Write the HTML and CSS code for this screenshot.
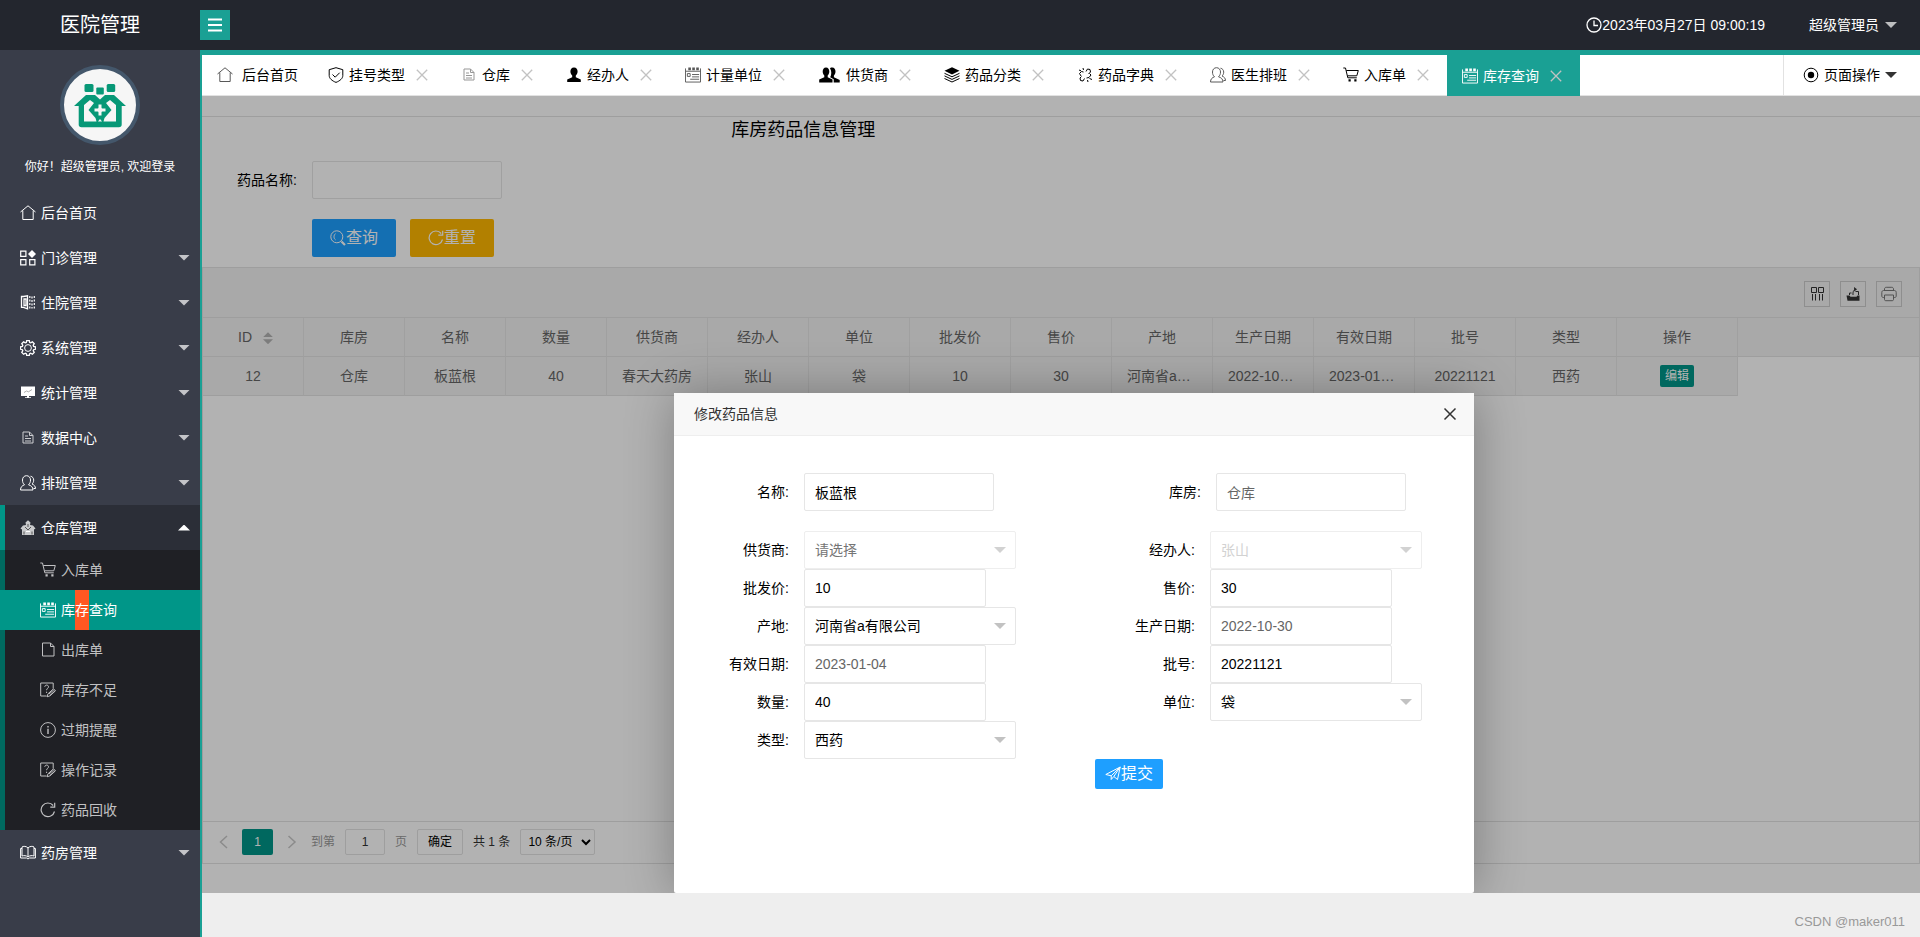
FILE: index.html
```html
<!DOCTYPE html>
<html lang="zh-CN">
<head>
<meta charset="utf-8">
<title>医院管理</title>
<link rel="stylesheet" href="styles.css">
</head>
<body>
<svg class="sprite" aria-hidden="true">
  <symbol id="i-menu" viewBox="0 0 16 16"><path d="M1 2.500h14M1 8h14M1 13.500h14" stroke-width="2"/></symbol>
  <symbol id="i-home" viewBox="0 0 16 16"><path d="M.5 7 8 .8 15.500 7M2.800 5.500V14.500H13.200V5.500"/></symbol>
  <symbol id="i-apps" viewBox="0 0 16 16"><path d="M.7 1.200h5.200v5.200H.7zM.7 9.700h5.200v5.200H.7zM9.700 9.700h5.200v5.200H9.700z" stroke-width="1.200"/><path d="M12 0l4 4-4 4-4-4z" fill="currentColor" stroke="none"/></symbol>
  <symbol id="i-ward" viewBox="0 0 16 16"><path d="M1.500 1.500h2l4-.7v13l-4-1.500h-2zM4 4h2v6.500H4z" stroke-width="1.300"/><path d="M9.800 1v13M12 1.500v12M14.300 1v13" stroke-dasharray="2 1.500" stroke-width="1.200"/></symbol>
  <symbol id="i-gear" viewBox="0 0 16 16"><circle cx="8" cy="8" r="3.400"/><path d="M6.700.6h2.600l.4 1.900 1 .4 1.700-1 1.800 1.800-1 1.700.4 1 1.900.4v2.500l-1.900.4-.4 1 1 1.700-1.800 1.800-1.700-1-1 .4-.4 1.900H6.700l-.4-1.900-1-.4-1.700 1-1.800-1.800 1-1.700-.4-1L.5 9.300V6.800l1.900-.4.4-1-1-1.700 1.800-1.800 1.700 1 1-.4z" stroke-width="1.300"/></symbol>
  <symbol id="i-board" viewBox="0 0 16 16"><path d="M1 1.500h14v9.500H9v1.200h2V13H5v-.8h2V11H1z" fill="currentColor" stroke="none"/><path d="M4 7.500l2.500-1.500 2 .8L12 4.500" stroke="#999" stroke-width=".8"/></symbol>
  <symbol id="i-doc" viewBox="0 0 16 16"><path d="M3 2h6.500L13 5.500V13H3zM9.500 2v3.500H13M5 6h3M5 8.500h6M5 11h6"/></symbol>
  <symbol id="i-users" viewBox="0 0 16 16"><path d="M.5 15c0-3 1.800-4.500 4-5.200C3 8.500 2.500 7 2.500 5c0-2.500 1.600-4.300 4-4.300s4 1.800 4 4.300c0 2-.6 3.500-2 4.800 2.500.7 4.500 2.200 4.500 5.200zM10.500 1.200c2 .3 3.200 2 3.200 3.900 0 1.700-.6 3-1.700 3.900 2 .8 3.500 2.200 3.500 4.500h-2"/></symbol>
  <symbol id="i-store" viewBox="0 0 16 16"><path d="M8 .3l2.500 2.200L10 5l3 .5 2.500 3-1.500 1V15H2V9.500l-1.500-1 2.500-3L6 5l-.5-2.500z" fill="currentColor" stroke="none" opacity=".75"/><path d="M4 14.500v-3M12 14.500v-3M5 7l3 3 3-3M8 4v3" stroke="#555"/><path d="M6 11.500h4" stroke="#fff"/></symbol>
  <symbol id="i-cart" viewBox="0 0 16 16"><path d="M.3 1h2.200l2.300 9.800h9M3.300 3.500h12l-1.500 5.300H4.600"/><path d="M5.500 12.200h2.200v2.300H5.500zM11.300 12.200h2.200v2.300h-2.200z" fill="currentColor" stroke="none"/></symbol>
  <symbol id="i-form" viewBox="0 0 17 16"><path d="M.5 1v14.500h16V1M.5 4h16M7.500 7.500h7.500M7.500 10h7.500M5.500 12.500h9.500"/><path d="M2.500 6.500h3v3h-3z"/><path d="M3.500 0h2.800v3H3.500zM7.700 0h2.800v3H7.700zM11.900 0h2.800v3h-2.800z" fill="currentColor" stroke="none"/></symbol>
  <symbol id="i-file" viewBox="0 0 16 16"><path d="M2.500 1h8L14 4.500V14H2.500zM10.500 1v3.500H14"/></symbol>
  <symbol id="i-ask" viewBox="0 0 16 16"><path d="M6.500 14H.7V1h12.500v5.500M4.800 4.800c0-2.300 3.700-2.300 3.700 0 0 1.500-1.900 1.600-1.900 3.400M6.600 9.700V11M7 14.800l1-3 5.500-5 2 2-5.500 5zM9 12l4.800-4M10 13.300l5-4.500"/></symbol>
  <symbol id="i-info" viewBox="0 0 16 16"><circle cx="8" cy="8" r="7.400"/><path d="M8 6.800V12M8 4v1.500" stroke-width="1.400"/></symbol>
  <symbol id="i-refresh" viewBox="0 0 16 16"><path d="M14.500 9.500A6.800 6.800 0 1 1 13.200 3.500M14.700.8v4.400h-4.400" stroke-width="1.200"/></symbol>
  <symbol id="i-book" viewBox="0 0 16 16"><path d="M8 3C6.500 1 3 1 2 2v9c1.500-.6 4.500-.6 6 1 1.500-1.600 4.500-1.600 6-1V2c-1-1-4.500-1-6 1zM8 3v9M2 3.500H.6v9.500h6l1.400 1 1.400-1h6V3.500H14"/></symbol>
  <symbol id="i-shield" viewBox="0 0 16 16"><path d="M8 .7l6.800 2v5.800c0 3-2.800 5.300-6.800 6.900-4-1.600-6.800-3.900-6.800-6.900V2.700zM4.500 7.500l2.700 2.700 4.500-4.500"/></symbol>
  <symbol id="i-person" viewBox="0 0 16 16"><path d="M8 .5c2.500 0 3.600 1.800 3.600 4 0 1.700-.8 3.200-1.800 4v1.800l5 2.200v2.500H1.200v-2.500l5-2.200V8.500c-1-.8-1.800-2.300-1.800-4C4.400 2.300 5.500.5 8 .5z" fill="currentColor" stroke="none"/></symbol>
  <symbol id="i-group" viewBox="0 0 21 16"><path d="M7 .5c2.200 0 3.300 1.800 3.300 4 0 1.700-.7 3-1.600 4v1.800l4.800 2.200v3H.2v-3L5.300 10.300V8.500c-.9-1-1.600-2.300-1.600-4 0-2.200 1.100-4 3.300-4zM11 1.200c.6-.6 1.400-.7 2.200-.7 2.200 0 3.300 1.800 3.300 4 0 1.700-.7 3-1.600 4v1.800l5.800 2.700v2.500h-6v-3.200l-3.500-2c1.400-2.500 1.600-6.500-.2-9.100z" fill="currentColor" stroke="none"/></symbol>
  <symbol id="i-layers" viewBox="0 0 16 16"><path d="M8 .3l7.500 3.500L8 7.500.5 3.800z" fill="currentColor" stroke="none"/><path d="M.5 6.300L8 9.800l7.500-3.500M.5 8.900L8 12.400l7.500-3.500M.5 11.500L8 15l7.500-3.500"/></symbol>
  <symbol id="i-scatter" viewBox="0 0 16 16"><path d="M6.500 5L4.500 4.500 2.500 6.500 4 9M6 1l.5 2M2 3l2 .8M9 4.500l1.500-2.500 2.500.5.500 2.500-2 2M9.500 11l2.500-.5 2-2.500-1.500-1.500M10.500 13l.5 2M12.500 11.500l2.500 1M7.500 11.500L6 14l-2.500-.5L3 11l1.500-1.500"/></symbol>
  <symbol id="i-radio" viewBox="0 0 16 16"><circle cx="8" cy="8" r="6.800"/><circle cx="8" cy="8" r="3.200" fill="currentColor" stroke="none"/></symbol>
  <symbol id="i-clock" viewBox="0 0 16 16"><circle cx="8" cy="8" r="7" stroke-width="1.300"/><path d="M8 3.500V8.500h4" stroke-width="1.300"/></symbol>
  <symbol id="i-close" viewBox="0 0 16 16"><path d="M2.800 2.800l10.400 10.400M13.200 2.800L2.800 13.200" stroke-width="1.300"/></symbol>
  <symbol id="i-x" viewBox="0 0 16 16"><path d="M2.500 2.500l11 11M13.500 2.500l-11 11" stroke-width="1.500"/></symbol>
  <symbol id="i-search" viewBox="0 0 16 16"><circle cx="6.800" cy="6.800" r="6"/><path d="M5.500 3.700C3.500 5 3.500 8.500 5.500 9.800"/><path d="M11.500 11.500l3.500 3.500" stroke-width="2.200"/></symbol>
  <symbol id="i-send" viewBox="0 0 16 16"><path d="M.8 8.500L15.200 1 12.500 13.500 8.800 10.500 6.200 13.500V9.800L15.200 1M.8 8.500L6.200 9.800M8.800 10.500L15.200 1"/></symbol>
  <symbol id="i-cols" viewBox="0 0 16 16"><path d="M2.500 1.500h5v5h-5zM9.500 1.500h5v5h-5zM3.500 8v6.500M6.500 8v6.500M10.500 8v6.500M13.500 8v6.500"/></symbol>
  <symbol id="i-export" viewBox="0 0 16 16"><path d="M1.500 9.500h3l1 1.200h6l1-1.200h2v5.200h-12z" fill="currentColor" stroke="none"/><path d="M4.500 9V7h2M10.500 5.500h3V9M8 9c-.3-3 .5-5 2.500-5.500"/><path d="M9 1l3 2.300L9.300 5.500z" fill="currentColor" stroke="none"/></symbol>
  <symbol id="i-print" viewBox="0 0 16 16"><path d="M3.500 4.500V3c0-1 .7-1.700 1.700-1.700h5.600c1 0 1.700.7 1.700 1.700v1.500M3.500 11.500H2.300c-1 0-1.500-.6-1.500-1.500V6.500c0-1.200.7-2 1.800-2h10.800c1.100 0 1.800.8 1.800 2V10c0 .9-.5 1.500-1.500 1.500h-1.200M3.500 9h9v4.500c0 .7-.5 1.200-1.200 1.200H4.700c-.7 0-1.200-.5-1.200-1.200z"/></symbol>
  <symbol id="i-prev" viewBox="0 0 16 16"><path d="M11 2L4.500 8l6.500 6" stroke-width="1.500"/></symbol>
  <symbol id="i-next" viewBox="0 0 16 16"><path d="M4.500 2L11 8l-6.500 6" stroke-width="1.500"/></symbol>
</svg>

<header class="topbar">
  <h1 class="brand">医院管理</h1>
  <button class="toggle" type="button" aria-label="收起菜单"><svg class="icon"><use href="#i-menu"/></svg></button>
  <div class="clock"><svg class="icon"><use href="#i-clock"/></svg><span>2023年03月27日 09:00:19</span></div>
  <button class="account" type="button">超级管理员<span class="caret"></span></button>
</header>

<div class="shell">
  <aside class="side">
    <div class="profile">
      <svg class="avatar" viewBox="0 0 80 80">
        <circle cx="40" cy="40" r="38" fill="#f6f6f6" stroke="#44576b" stroke-width="4"/>
        <g fill="#079877">
          <rect x="24.500" y="19" width="9" height="8" rx="1.500"/><rect x="36.300" y="22.500" width="7.500" height="7" rx="1"/><rect x="46.700" y="19" width="8.500" height="8" rx="1.500"/>
          <path d="M14 41L26 30h9l5 4.500 5-4.500h9l12 11h-4.300v18.500c0 1.800-1 2.800-2.800 2.800H21.500c-1.800 0-2.800-1-2.800-2.800V41z"/>
        </g>
        <path d="M24 40l6-5 4 3-5.500 7 7 8 1 3.500H24zM56 40l-6-5-4 3 5.500 7-7 8-1 3.500H56z" fill="#f6f6f6"/>
        <path d="M37.500 38.500h5V42.500h4v5h-4v4h-5v-4h-4v-5h4z" fill="#f6f6f6" stroke="#079877" stroke-width="2" stroke-linejoin="round"/>
        <path d="M38 56.500l2-2.500 2 2.500z" fill="#f6f6f6"/>
      </svg>
      <p class="hello">你好！超级管理员, 欢迎登录</p>
    </div>
    <nav class="menu">
      <a class="item" href="#"><svg class="icon"><use href="#i-home"/></svg>后台首页</a>
      <a class="item" href="#"><svg class="icon"><use href="#i-apps"/></svg>门诊管理<span class="caret"></span></a>
      <a class="item" href="#"><svg class="icon"><use href="#i-ward"/></svg>住院管理<span class="caret"></span></a>
      <a class="item" href="#"><svg class="icon"><use href="#i-gear"/></svg>系统管理<span class="caret"></span></a>
      <a class="item" href="#"><svg class="icon"><use href="#i-board"/></svg>统计管理<span class="caret"></span></a>
      <a class="item" href="#"><svg class="icon dim"><use href="#i-doc"/></svg>数据中心<span class="caret"></span></a>
      <a class="item" href="#"><svg class="icon"><use href="#i-users"/></svg>排班管理<span class="caret"></span></a>
      <div class="group">
        <a class="item open" href="#"><svg class="icon"><use href="#i-store"/></svg>仓库管理<span class="caret up"></span></a>
        <div class="sub">
          <a href="#"><svg class="icon"><use href="#i-cart"/></svg>入库单</a>
          <a class="current" href="#"><svg class="icon"><use href="#i-form"/></svg>库<span class="mark">存</span>查询</a>
          <a href="#"><svg class="icon"><use href="#i-file"/></svg>出库单</a>
          <a href="#"><svg class="icon"><use href="#i-ask"/></svg>库存不足</a>
          <a href="#"><svg class="icon"><use href="#i-info"/></svg>过期提醒</a>
          <a href="#"><svg class="icon"><use href="#i-ask"/></svg>操作记录</a>
          <a href="#"><svg class="icon"><use href="#i-refresh"/></svg>药品回收</a>
        </div>
      </div>
      <a class="item" href="#"><svg class="icon"><use href="#i-book"/></svg>药房管理<span class="caret"></span></a>
    </nav>
  </aside>

  <main class="main">
    <nav class="tabs">
      <a class="tab first" href="#"><svg class="icon soft"><use href="#i-home"/></svg>后台首页</a>
      <a class="tab" href="#"><svg class="icon"><use href="#i-shield"/></svg>挂号类型<svg class="icon close"><use href="#i-close"/></svg></a>
      <a class="tab" href="#"><svg class="icon pale"><use href="#i-doc"/></svg>仓库<svg class="icon close"><use href="#i-close"/></svg></a>
      <a class="tab" href="#"><svg class="icon"><use href="#i-person"/></svg>经办人<svg class="icon close"><use href="#i-close"/></svg></a>
      <a class="tab" href="#"><svg class="icon soft"><use href="#i-form"/></svg>计量单位<svg class="icon close"><use href="#i-close"/></svg></a>
      <a class="tab" href="#"><svg class="icon wide"><use href="#i-group"/></svg>供货商<svg class="icon close"><use href="#i-close"/></svg></a>
      <a class="tab" href="#"><svg class="icon"><use href="#i-layers"/></svg>药品分类<svg class="icon close"><use href="#i-close"/></svg></a>
      <a class="tab" href="#"><svg class="icon"><use href="#i-scatter"/></svg>药品字典<svg class="icon close"><use href="#i-close"/></svg></a>
      <a class="tab" href="#"><svg class="icon soft"><use href="#i-users"/></svg>医生排班<svg class="icon close"><use href="#i-close"/></svg></a>
      <a class="tab" href="#"><svg class="icon"><use href="#i-cart"/></svg>入库单<svg class="icon close"><use href="#i-close"/></svg></a>
      <a class="tab active" href="#"><svg class="icon"><use href="#i-form"/></svg>库存查询<svg class="icon close"><use href="#i-close"/></svg></a>
      <button class="page-ops" type="button"><svg class="icon"><use href="#i-radio"/></svg>页面操作<span class="caret dark"></span></button>
    </nav>

    <section class="frame">
      <div class="panel">
        <h2 class="title">库房药品信息管理</h2>
        <form class="search">
          <label for="q">药品名称:</label>
          <input id="q" class="box w190" type="text">
          <div class="actions">
            <button class="btn blue" type="button"><svg class="icon"><use href="#i-search"/></svg>查询</button>
            <button class="btn amber" type="button"><svg class="icon"><use href="#i-refresh"/></svg>重置</button>
          </div>
        </form>
      </div>

      <div class="grid">
        <div class="tools">
          <button type="button" aria-label="筛选列"><svg class="icon"><use href="#i-cols"/></svg></button>
          <button type="button" aria-label="导出"><svg class="icon"><use href="#i-export"/></svg></button>
          <button class="gray" type="button" aria-label="打印"><svg class="icon"><use href="#i-print"/></svg></button>
        </div>
        <table>
          <colgroup><col span="14" class="c"><col class="c-op"><col></colgroup>
          <thead><tr>
            <th class="sortable">ID<span class="sort"></span></th><th>库房</th><th>名称</th><th>数量</th><th>供货商</th><th>经办人</th><th>单位</th><th>批发价</th><th>售价</th><th>产地</th><th>生产日期</th><th>有效日期</th><th>批号</th><th>类型</th><th>操作</th><th class="fill"></th>
          </tr></thead>
          <tbody><tr>
            <td>12</td><td>仓库</td><td>板蓝根</td><td>40</td><td>春天大药房</td><td>张山</td><td>袋</td><td>10</td><td>30</td><td>河南省a有限公司</td><td>2022-10-30</td><td>2023-01-04</td><td>20221121</td><td>西药</td><td><button class="edit" type="button">编辑</button></td><td class="fill"></td>
          </tr></tbody>
        </table>
        <div class="pager">
          <svg class="icon arrow"><use href="#i-prev"/></svg>
          <span class="cur">1</span>
          <svg class="icon arrow"><use href="#i-next"/></svg>
          <label class="skip">到第<input type="text" value="1">页</label>
          <button type="button">确定</button>
          <span class="count">共 1 条</span>
          <select aria-label="每页条数"><option>10 条/页</option></select>
        </div>
      </div>

      <div class="shade"></div>
      <div class="dialog" role="dialog" aria-labelledby="dlg-title">
        <div class="dialog-head"><h3 id="dlg-title">修改药品信息</h3><button type="button" aria-label="关闭"><svg class="icon"><use href="#i-x"/></svg></button></div>
        <form class="edit-form">
          <div class="row lead">
            <div class="field"><label for="f1">名称:</label><input id="f1" class="box w190" type="text" value="板蓝根"></div>
            <div class="field"><label for="f2">库房:</label><input id="f2" class="box w190 mute" type="text" value="仓库" readonly></div>
          </div>
          <div class="row">
            <div class="field"><label for="f3">供货商:</label><span class="pick off"><select id="f3" class="box ph" disabled><option>请选择</option></select></span></div>
            <div class="field"><label for="f4">经办人:</label><span class="pick off"><select id="f4" class="box" disabled><option>张山</option></select></span></div>
          </div>
          <div class="row">
            <div class="field"><label for="f5">批发价:</label><input id="f5" class="box w182" type="text" value="10"></div>
            <div class="field"><label for="f6">售价:</label><input id="f6" class="box w182" type="text" value="30"></div>
          </div>
          <div class="row">
            <div class="field"><label for="f7">产地:</label><span class="pick"><select id="f7" class="box"><option>河南省a有限公司</option></select></span></div>
            <div class="field"><label for="f8">生产日期:</label><input id="f8" class="box w182 mute" type="text" value="2022-10-30" readonly></div>
          </div>
          <div class="row">
            <div class="field"><label for="f9">有效日期:</label><input id="f9" class="box w182 mute" type="text" value="2023-01-04" readonly></div>
            <div class="field"><label for="f10">批号:</label><input id="f10" class="box w182" type="text" value="20221121"></div>
          </div>
          <div class="row">
            <div class="field"><label for="f11">数量:</label><input id="f11" class="box w182" type="text" value="40"></div>
            <div class="field"><label for="f12">单位:</label><span class="pick"><select id="f12" class="box"><option>袋</option></select></span></div>
          </div>
          <div class="row">
            <div class="field"><label for="f13">类型:</label><span class="pick"><select id="f13" class="box"><option>西药</option></select></span></div>
          </div>
          <button class="btn blue small" type="button"><svg class="icon"><use href="#i-send"/></svg>提交</button>
        </form>
      </div>
    </section>

    <footer class="foot">CSDN @maker011</footer>
  </main>
</div>
</body>
</html>
```

FILE: styles.css
```css
* { box-sizing: border-box; margin: 0; padding: 0; }
body {
  display: flex;
  flex-direction: column;
  min-height: 100vh;
  font: 14px/24px "Liberation Sans", "Noto Sans CJK SC", sans-serif;
  color: #000;
  background: #fff;
}
a { color: inherit; text-decoration: none; }
button, input, select { font: inherit; color: inherit; border: 0; background: none; outline: 0; }
button { cursor: pointer; }
.sprite { display: none; }
.icon { width: 16px; height: 16px; flex: none; fill: none; stroke: currentColor; stroke-width: 1; }
.caret {
  width: 12px; height: 6px; flex: none;
  background: currentColor;
  clip-path: polygon(0 0, 100% 0, 50% 100%);
}
.caret.up { clip-path: polygon(50% 0, 100% 100%, 0 100%); }

/* top bar */
.topbar { display: flex; align-items: center; height: 50px; padding-right: 23px; background: #23262e; color: #fff; }
.brand { width: 200px; font-size: 20px; font-weight: 400; text-align: center; }
.toggle { display: flex; align-items: center; justify-content: center; width: 30px; height: 30px; background: #1aa094; }
.clock { display: flex; align-items: center; margin-left: auto; }
.account { display: flex; align-items: center; gap: 6px; margin-left: 44px; }
.account .caret { opacity: .7; }

/* sidebar */
.shell { display: flex; flex: 1; }
.side { width: 200px; flex: none; background: #393d49; color: #fff; }
.profile { height: 140px; padding-top: 15px; text-align: center; }
.avatar { display: block; width: 80px; height: 80px; margin: 0 auto 10px; }
.hello { font-size: 12px; line-height: 24px; white-space: nowrap; }
.item { display: flex; align-items: center; gap: 5px; height: 45px; padding: 0 10px 0 20px; }
.item .caret { margin-left: auto; opacity: .7; }
.item .caret.up { opacity: 1; }
.item .dim { opacity: .75; }
.item.open { background: #2b2e37; padding-left: 15px; }
.group { border-left: 5px solid #009688; }
.sub { margin-left: -5px; border-left: 5px solid #00695f; background: #1f2025; color: #c1c1c3; }
.sub a { display: flex; align-items: center; height: 40px; padding-left: 35px; }
.sub .icon { margin-right: 5px; }
.sub .current { margin-left: -5px; padding-left: 40px; background: #009688; color: #fff; }
.mark { line-height: 40px; background: #ff5722; }

/* tabs */
.main { display: flex; flex-direction: column; flex: 1; min-width: 0; border-top: 5px solid #1aa094; border-left: 2px solid #1aa094; background: #eee; }
.tabs { display: flex; height: 41px; border-bottom: 1px solid #e2e2e2; background: #fff; }
.tab { display: flex; align-items: center; gap: 5px; height: 40px; padding: 0 15px; white-space: nowrap; }
.tab.first { gap: 9px; }
.tab .wide { width: 23px; }
.tab .soft { opacity: .65; }
.tab .pale { opacity: .4; }
.tab .close { margin: 0 1px 0 4px; color: #c2c2c2; }
.tab.active { height: 41px; background: #1aa094; color: #fff; }
.page-ops { display: flex; align-items: center; gap: 5px; margin-left: auto; padding: 0 23px 0 19px; border-left: 1px solid #e2e2e2; }
.dark { color: #333; }

/* page content */
.frame { position: relative; display: flex; flex-direction: column; flex: 1; overflow: hidden; padding: 20px 0 29px; background: #fff; }
.panel { height: 151px; border-top: 1px solid #e2e2e2; }
.title { width: 70%; font-size: 18px; font-weight: 400; line-height: 26px; text-align: center; }
.search { display: grid; grid-template-columns: 95px auto; column-gap: 15px; row-gap: 20px; padding-top: 18px; }
.search label { line-height: 38px; text-align: right; }
.actions { grid-column: 2; display: flex; gap: 14px; }
.box { display: block; height: 38px; padding: 0 10px; border: 1px solid #e6e6e6; border-radius: 2px; }
.w190 { width: 190px; }
.w182 { width: 182px; }
.mute { color: #666; }
.btn { display: flex; align-items: center; justify-content: center; width: 84px; height: 38px; border-radius: 2px; font-size: 16px; color: #fff; }
.blue { background: #1e9fff; }
.amber { background: #ffb800; }

/* data grid */
.grid { display: flex; flex-direction: column; flex: 1; border: 1px solid #e2e2e2; color: #666; }
.tools { display: flex; justify-content: flex-end; gap: 10px; height: 50px; padding: 13px 17px 0 0; border-bottom: 1px solid #e2e2e2; background: #f2f2f2; }
.tools button { display: flex; align-items: center; justify-content: center; width: 26px; height: 26px; border: 1px solid #ccc; color: #333; }
.tools .gray { color: #777; }
table { width: 100%; table-layout: fixed; border-spacing: 0; }
.c { width: 101px; }
.c-op { width: 121px; }
th, td { height: 39px; padding: 0 15px; overflow: hidden; border-right: 1px solid #e6e6e6; border-bottom: 1px solid #e2e2e2; background: #f2f2f2; font-weight: 400; line-height: 28px; text-align: center; text-overflow: ellipsis; white-space: nowrap; }
th.sortable { padding: 0 11px 0 16px; }
th.fill { border-right: 0; }
td.fill { border: 0; background: #fff; }
.sort { display: inline-flex; flex-direction: column; gap: 2px; margin-left: 11px; vertical-align: middle; }
.sort::before, .sort::after { content: ""; width: 10px; height: 5px; background: #b2b2b2; }
.sort::before { clip-path: polygon(50% 0, 100% 100%, 0 100%); }
.sort::after { clip-path: polygon(0 0, 100% 0, 50% 100%); }
.edit { display: block; width: 34px; height: 22px; margin: 0 auto; border-radius: 2px; background: #009688; color: #fff; font-size: 12px; line-height: 22px; }
.pager { display: flex; align-items: center; height: 42px; margin-top: auto; padding: 0 0 1px 13px; border-top: 1px solid #e2e2e2; font-size: 12px; }
.arrow { color: #c8c8c8; }
.cur { width: 31px; height: 26px; margin: 0 11px 0 10px; border-radius: 2px; background: #009688; color: #fff; line-height: 26px; text-align: center; }
.skip { display: flex; align-items: center; margin-left: 11px; color: #999; }
.skip input { width: 40px; height: 26px; margin: 0 10px; border: 1px solid #e2e2e2; border-radius: 2px; color: #333; text-align: center; }
.pager button { width: 46px; height: 26px; margin: 0 10px; border: 1px solid #e2e2e2; border-radius: 2px; color: #000; }
.count { color: #333; }
.pager select { width: 75px; height: 26px; margin-left: 10px; padding: 0 3px; border: 1px solid #e2e2e2; border-radius: 2px; color: #000; }

/* dialog */
.shade { position: absolute; inset: 0; background: rgba(0, 0, 0, .3); }
.dialog { position: absolute; top: 297px; left: 472px; width: 800px; height: 500px; border-radius: 2px; background: #fff; box-shadow: 1px 1px 50px rgba(0, 0, 0, .3); }
.dialog-head { display: flex; align-items: center; justify-content: space-between; height: 43px; padding: 0 16px 0 20px; border-bottom: 1px solid #eee; background: #f8f8f8; color: #333; }
.dialog-head h3 { font-size: 14px; font-weight: 400; }
.dialog-head button { display: flex; }
.edit-form { padding-top: 37px; }
.row { display: grid; grid-template-columns: 406px auto; }
.row.lead { grid-template-columns: 412px auto; margin-bottom: 20px; }
.field { display: flex; gap: 15px; }
.field label { width: 115px; line-height: 38px; text-align: right; }
.pick { position: relative; }
.pick::after {
  content: ""; position: absolute; top: 16px; right: 10px; width: 12px; height: 6px;
  background: #c2c2c2; clip-path: polygon(0 0, 100% 0, 50% 100%); pointer-events: none;
}
.pick select { width: 212px; appearance: none; opacity: 1; }
.off select { border-color: #eee; color: #d2d2d2; }
.off .ph { color: #757575; }
.off::after { background: #d2d2d2; }
.small { width: 68px; height: 30px; margin-left: 421px; }

.foot { height: 44px; padding-right: 15px; color: #999; font-size: 13px; line-height: 58px; text-align: right; overflow: hidden; }
```
